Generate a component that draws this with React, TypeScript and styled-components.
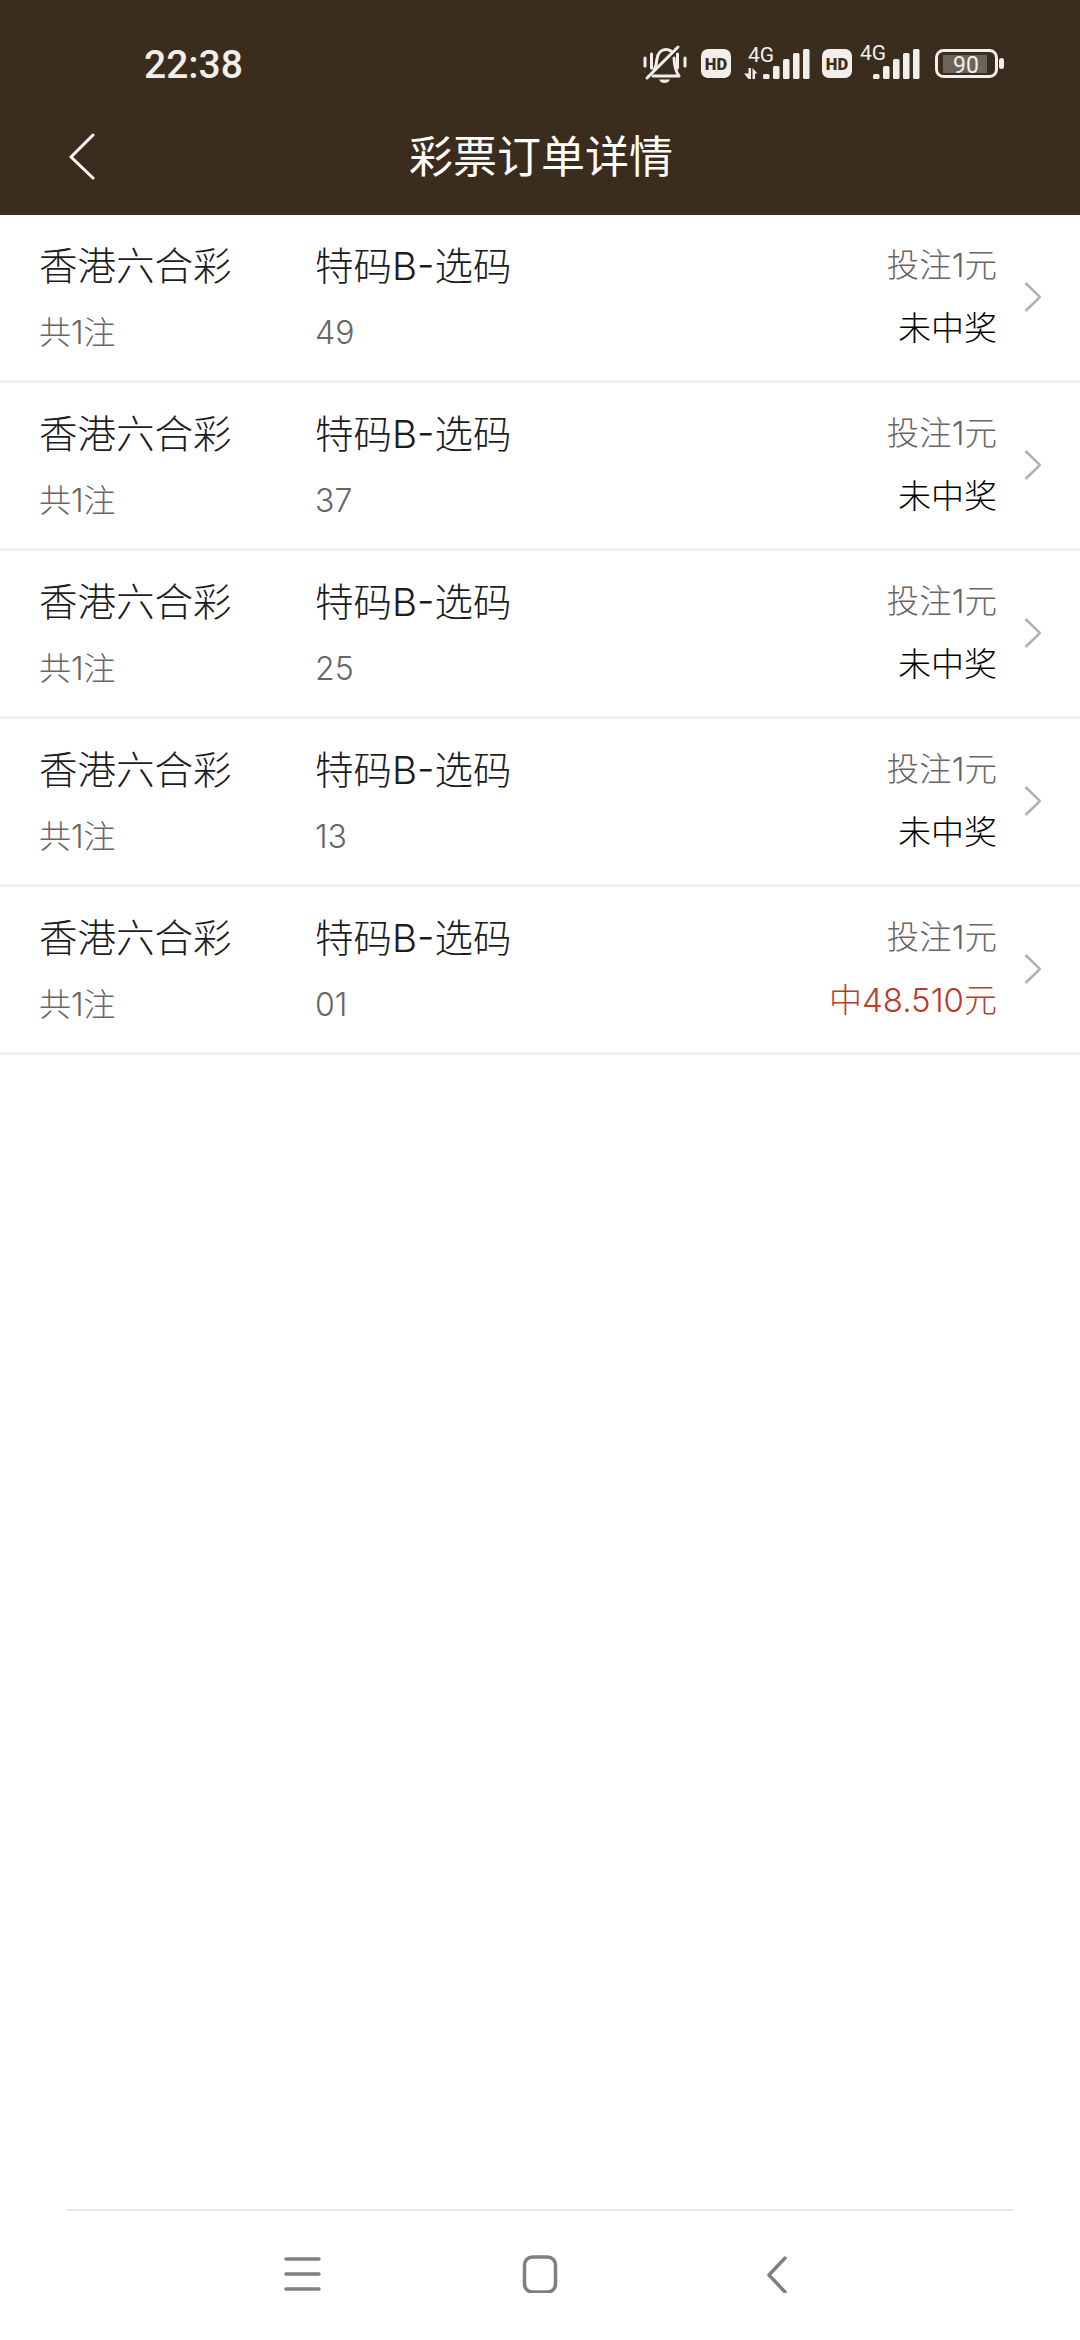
import React from "react";
import styled, { createGlobalStyle } from "styled-components";

const Global = createGlobalStyle`
  html, body { margin: 0; padding: 0; background: #fff; }
  body { font-family: Inter, "Noto Sans CJK SC", "Noto Sans", sans-serif; }
  * { box-sizing: border-box; }
`;

const Page = styled.div`
  width: 1080px;
  height: 2340px;
  display: flex;
  flex-direction: column;
  background: #fff;
  overflow: hidden;
`;

const Header = styled.header`
  height: 215px;
  flex: none;
  background: #3b2d1e;
  display: flex;
  flex-direction: column;
`;

const StatusBar = styled.div`
  height: 122px;
  flex: none;
  display: flex;
  align-items: flex-start;
  padding: 41px 76px 0 144px;
  justify-content: space-between;
`;

const Clock = styled.div`
  font-family: Roboto, sans-serif;
  font-weight: 500;
  font-size: 39px;
  line-height: 45px;
  margin-top: 2px;
  color: #f2efea;
`;

const StatusIcons = styled.div`
  display: flex;
  align-items: flex-start;
  padding-top: 4px;
`;

const StatusIcon = styled.svg<{ $ml: number }>`
  display: block;
  flex: none;
  overflow: visible;
  margin-left: ${(p) => p.$ml}px;
`;

const IconText = styled.text`
  font-family: Roboto, sans-serif;
  fill: #f2efea;
`;

const NavBar = styled.div`
  flex: 1;
  display: flex;
  align-items: flex-start;
  position: relative;
  justify-content: center;
  padding-left: 2px;
`;

const BackIcon = styled.svg`
  position: absolute;
  left: 67px;
  top: 10px;
`;

const Title = styled.h1`
  margin: 2px 0 0;
  font-family: "Noto Sans CJK SC", sans-serif;
  font-size: 44px;
  line-height: 60px;
  font-weight: 400;
  color: #fff;
`;

const List = styled.div`
  display: flex;
  flex-direction: column;
`;

const Row = styled.div`
  height: 168px;
  border-bottom: 3px solid #f1f1f1;
  display: flex;
  align-items: flex-start;
  padding: 0 39px 0 39px;
`;

const LeftCol = styled.div`
  width: 276px;
  flex: none;
  display: flex;
  flex-direction: column;
`;

const MiddleCol = styled.div`
  flex: 1;
  display: flex;
  flex-direction: column;
`;

const RightCol = styled.div`
  display: flex;
  flex-direction: column;
  align-items: flex-end;
`;

const Main = styled.div`
  font-size: 38.5px;
  line-height: 50px;
  margin-top: 26px;
  font-weight: 300;
  color: #1c1c1c;
  white-space: nowrap;
`;

const Sub = styled.div`
  font-size: 32px;
  line-height: 44px;
  margin-top: 20px;
  font-weight: 300;
  color: #666;
  white-space: nowrap;
`;

const Bet = styled.div`
  font-size: 32.5px;
  line-height: 44px;
  margin-top: 29px;
  font-weight: 300;
  color: #666;
  white-space: nowrap;
`;

const Result = styled.div<{ $win?: boolean }>`
  font-size: 33px;
  line-height: 44px;
  margin-top: 18px;
  font-weight: 300;
  color: ${(p) => (p.$win ? "#b83c2b" : "#000")};
  white-space: nowrap;
`;

const Chevron = styled.svg`
  flex: none;
  margin: 66px 0 0 25px;
`;

const Spacer = styled.div`
  flex: 1;
`;

const BottomNav = styled.div`
  height: 131px;
  flex: none;
  margin: 0 66px;
  border-top: 2px solid #e8e8e8;
  display: flex;
  align-items: flex-start;
  padding: 44px 0 0 218px;
`;

const NavGlyph = styled.svg<{ $ml: number }>`
  display: block;
  flex: none;
  margin-left: ${(p) => p.$ml}px;
`;

const rows = [
  { num: "49", result: "未中奖" },
  { num: "37", result: "未中奖" },
  { num: "25", result: "未中奖" },
  { num: "13", result: "未中奖" },
  { num: "01", result: "中48.510元", win: true },
];

const C = "#f2efea";

const Bars = ({ x }: { x: number }) => (
  <g fill={C}>
    <rect x={x} y={29} width={6.5} height={5} rx={1.5} />
    <rect x={x + 10} y={21} width={6.5} height={13} rx={1.5} />
    <rect x={x + 20} y={14} width={6.5} height={20} rx={1.5} />
    <rect x={x + 30} y={8} width={6.5} height={26} rx={1.5} />
    <rect x={x + 40} y={4} width={6.5} height={30} rx={1.5} />
  </g>
);

const HdIcon = ({ ml }: { ml: number }) => (
  <StatusIcon $ml={ml} width={30} height={34} viewBox="0 0 30 34">
    <rect x={0} y={4} width={30} height={29} rx={7} fill={C} />
    <IconText x={15} y={24.5} textAnchor="middle" fontSize={16.5} fontWeight={900} style={{ fill: "#3b2d1e" }}>
      HD
    </IconText>
  </StatusIcon>
);

export default function App() {
  return (
    <Page>
      <Global />
      <Header>
        <StatusBar>
          <Clock>22:38</Clock>
          <StatusIcons>
            <StatusIcon $ml={0} width={45} height={40} viewBox="0 0 45 40" fill="none" stroke={C} strokeLinecap="round" strokeLinejoin="round">
              <path d="M2 13v8M8.500 9v14M34.500 9v14M42 13v8" strokeWidth={3} />
              <path d="M11 25c1.500-2.500 2.500-6 2.800-10C14.500 8 18.500 4.500 23 4.500c2 0 3.500.5 5 1.500M31 13c.3 7 1.500 13 5 18H10" strokeWidth={3} />
              <path d="M4 33L35 2" strokeWidth={3} />
              <path d="M16 34.500h11c-1 2.500-3 3.500-5.500 3.500S17 37 16 34.500z" fill={C} stroke="none" />
            </StatusIcon>
            <HdIcon ml={13} />
            <StatusIcon $ml={12} width={67} height={40} viewBox="0 0 67 40">
              <IconText x={5} y={17} fontSize={21}>4G</IconText>
              <path fill={C} d="M5.500 23H8v11H5.500L1 28.500h4.500zM9.500 34V23l5 5.500H12V34z" />
              <Bars x={20} />
            </StatusIcon>
            <HdIcon ml={12} />
            <StatusIcon $ml={6} width={62} height={40} viewBox="0 0 62 40">
              <IconText x={2} y={15} fontSize={21}>4G</IconText>
              <Bars x={15} />
            </StatusIcon>
            <StatusIcon $ml={15} width={69} height={34} viewBox="0 0 69 34">
              <rect x={1.500} y={5.500} width={60} height={26} rx={7} fill="none" stroke={C} strokeWidth={3} />
              <rect x={8} y={10} width={44} height={18} fill="#6e6357" />
              <rect x={64} y={13} width={5} height={11} rx={2.500} fill={C} />
              <IconText x={31} y={27.500} textAnchor="middle" fontSize={23}>90</IconText>
            </StatusIcon>
          </StatusIcons>
        </StatusBar>
        <NavBar>
          <BackIcon width={30} height={48} viewBox="0 0 30 48" fill="none" stroke="#fff" strokeWidth={3} strokeLinecap="round" strokeLinejoin="round">
            <path d="M26 3L4 25l22 21" />
          </BackIcon>
          <Title>彩票订单详情</Title>
        </NavBar>
      </Header>
      <List>
        {rows.map((r) => (
          <Row key={r.num}>
            <LeftCol>
              <Main>香港六合彩</Main>
              <Sub>共1注</Sub>
            </LeftCol>
            <MiddleCol>
              <Main>特码B-选码</Main>
              <Sub>{r.num}</Sub>
            </MiddleCol>
            <RightCol>
              <Bet>投注1元</Bet>
              <Result $win={r.win}>{r.result}</Result>
            </RightCol>
            <Chevron width={19} height={32} viewBox="0 0 19 32" fill="none" stroke="#b0b0b0" strokeWidth={2.500}>
              <path d="M3.500 2L18 16 3.500 30" />
            </Chevron>
          </Row>
        ))}
      </List>
      <Spacer />
      <BottomNav>
        <NavGlyph $ml={0} width={38} height={38} viewBox="0 0 38 38" fill="none" stroke="#808080" strokeWidth={3.500} strokeLinecap="round">
          <path d="M2 4h33M2 19h33M2 34h33" />
        </NavGlyph>
        <NavGlyph $ml={200} width={38} height={38} viewBox="0 0 38 38" fill="none" stroke="#808080" strokeWidth={3.500}>
          <rect x={2.500} y={2} width={31} height={35} rx={8} />
        </NavGlyph>
        <NavGlyph $ml={207} width={38} height={38} viewBox="0 0 38 38" fill="none" stroke="#808080" strokeWidth={3.500} strokeLinecap="round" strokeLinejoin="round">
          <path d="M18 3L2 20l16 17" />
        </NavGlyph>
      </BottomNav>
    </Page>
  );
}
